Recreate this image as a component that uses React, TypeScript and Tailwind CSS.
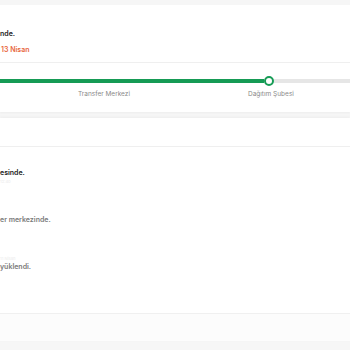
export default function App() {
  return (
    <div className="h-[350px] w-[350px] overflow-hidden bg-[#f6f6f6] font-['Inter',sans-serif]">
      <div className="pt-[5px]">
        <section className="bg-white shadow-[0_1px_2px_rgba(0,0,0,0.04)]">
          <div className="h-[58px] border-b border-[#efefef] pt-[23px]">
            <p className="text-[7px] font-semibold leading-[12px] text-[#1a1a1a]">nde.</p>
            <p className="mt-[4px] pl-[1px] text-[7px] font-semibold leading-[12px] text-[#e8663d]">13 Nisan</p>
          </div>
          <div className="h-[49px] pt-[13px]">
            <div className="flex items-center">
              <div className="h-[4px] w-[264px] bg-[#169b55]" />
              <div className="h-[10px] w-[10px] shrink-0 rounded-full border-[2.5px] border-[#169b55] bg-white" />
              <div className="h-[4px] flex-1 bg-[#e6e6e6]" />
            </div>
            <div className="mt-[3px] flex text-[6.5px] leading-[10px] text-[#8a8a8a]">
              <span className="ml-[78px]">Transfer Merkezi</span>
              <span className="ml-[118px]">Dağıtım Şubesi</span>
            </div>
          </div>
        </section>
      </div>

      <section className="mt-[6px] bg-white shadow-[0_-1px_3px_rgba(0,0,0,0.04)]">
        <div className="h-[29px] border-b border-[#efefef]" />
        <div className="h-[166px] pt-[20px] text-[7px] font-semibold leading-[12px]">
          <p className="text-[#1a1a1a]">esinde.</p>
          <p className="h-[5px] w-[24px] text-[4px] leading-[5px] text-[#efefef]">12:40</p>
          <p className="mt-[30px] text-[#7a7a7a]">er merkezinde.</p>
          <p className="mt-[30px] h-[5px] w-[30px] text-[4px] leading-[5px] text-[#f0f0f0]">11 Nisan</p>
          <p className="text-[#7a7a7a]">yüklendi.</p>
        </div>
        <div className="h-[28px] border-t border-[#f0f0f0] bg-[#fcfcfc]" />
      </section>
    </div>
  );
}
